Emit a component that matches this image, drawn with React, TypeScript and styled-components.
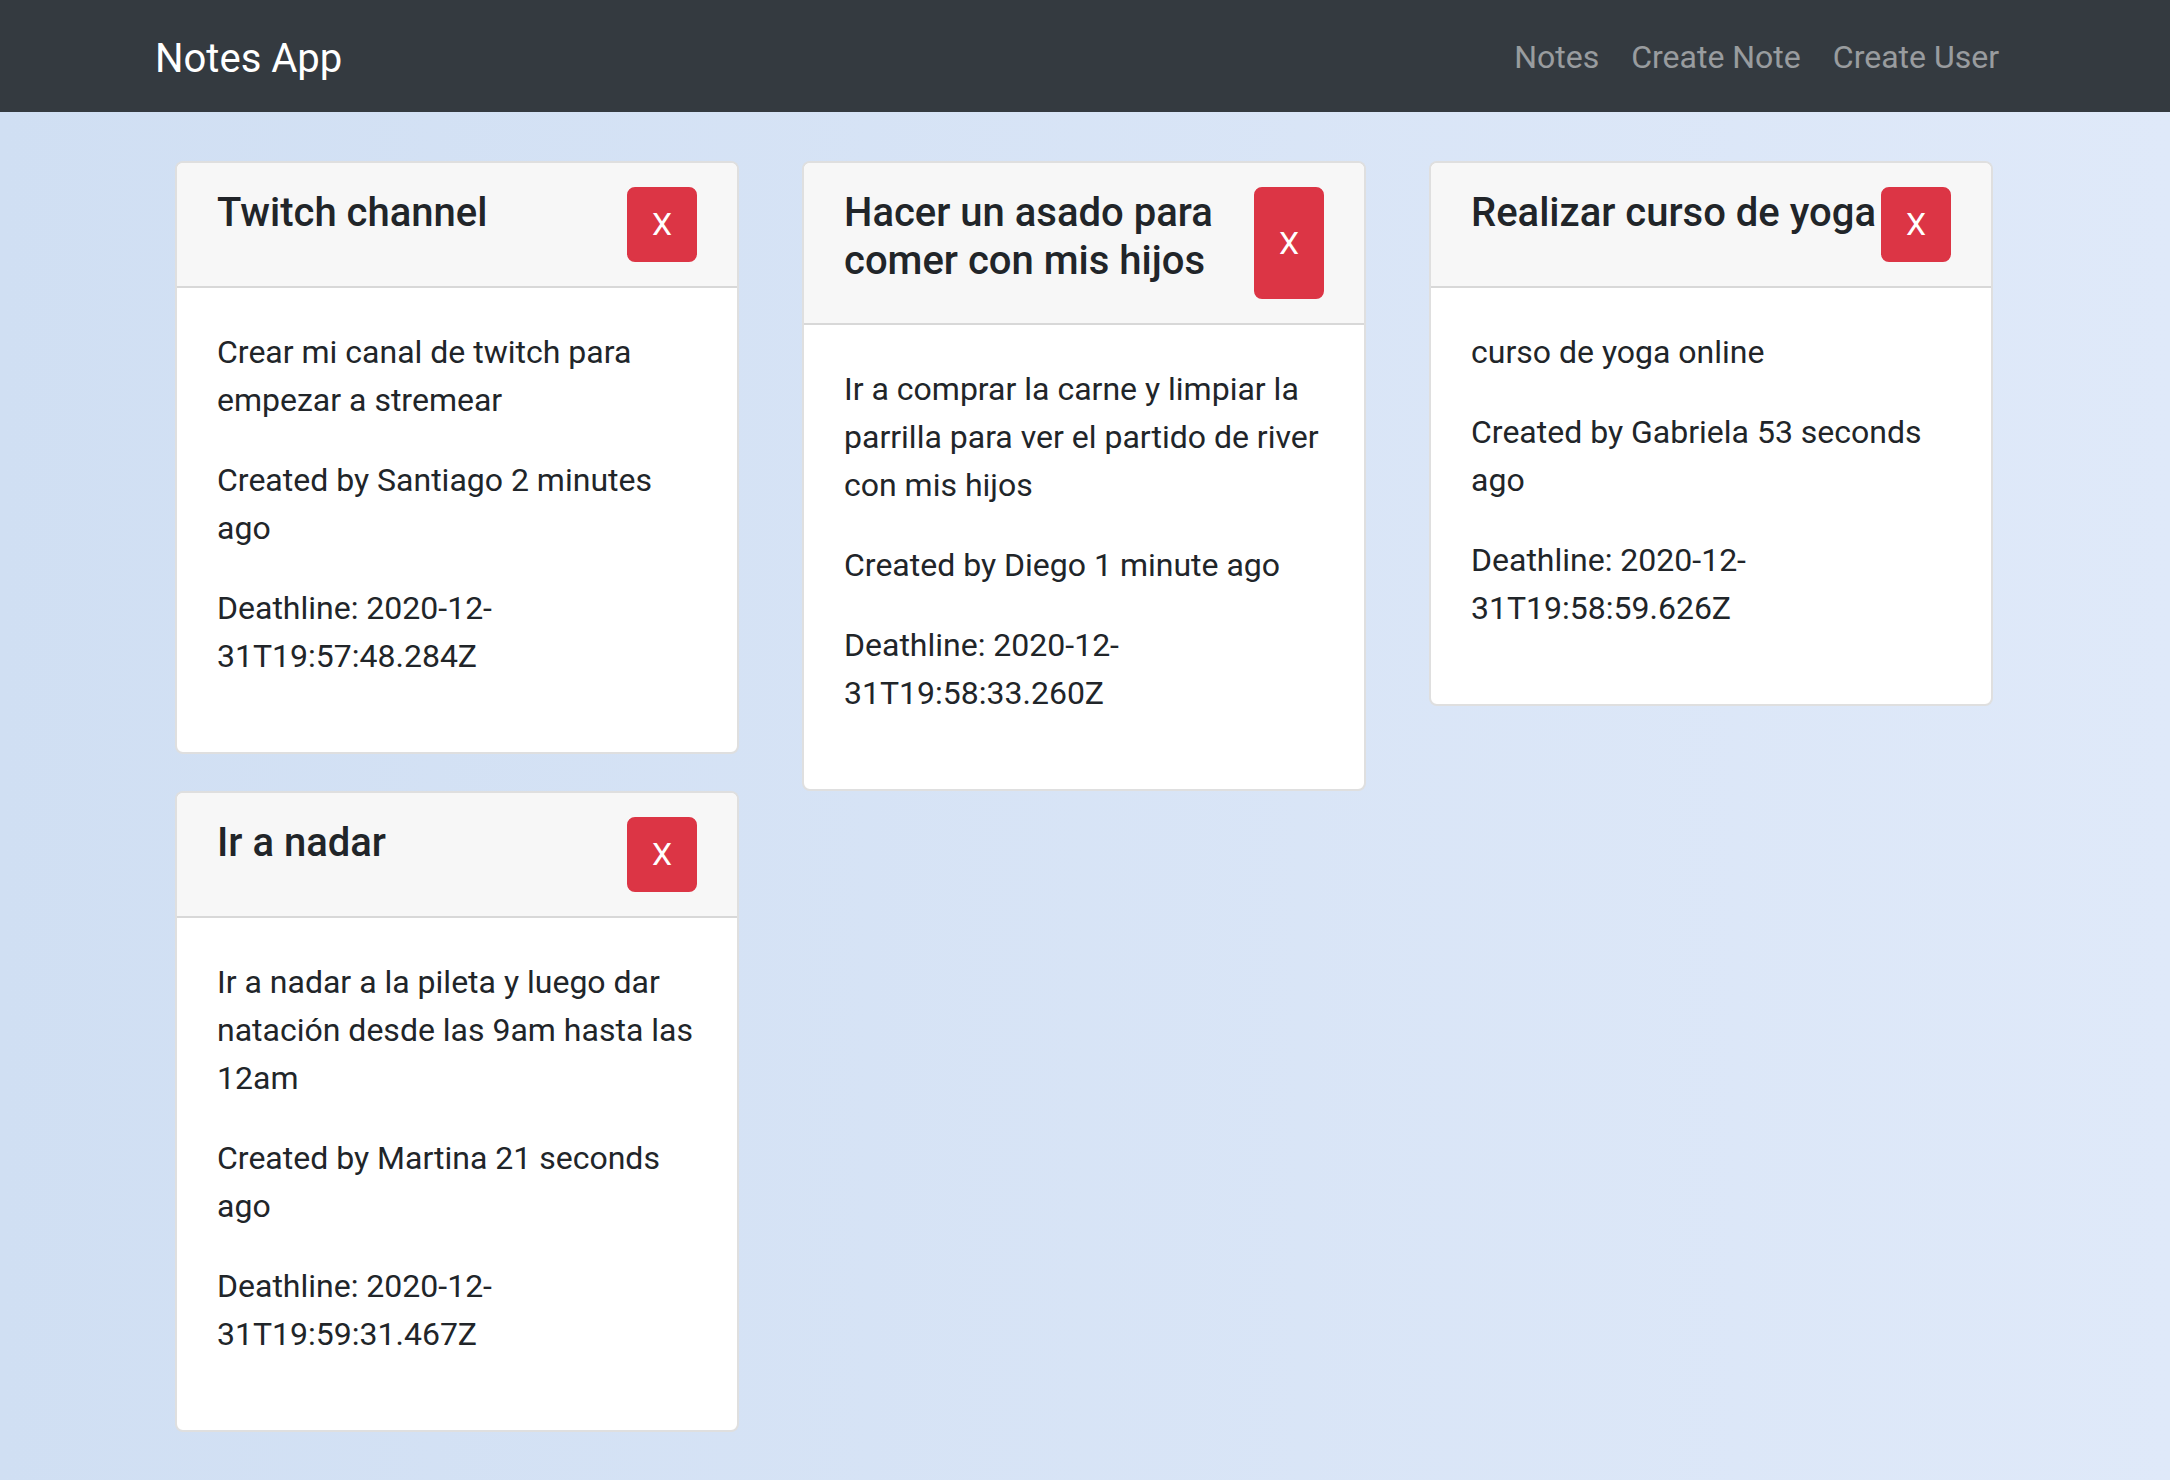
import React from "react";
import styled, { createGlobalStyle } from "styled-components";

const GlobalStyle = createGlobalStyle`
  * { box-sizing: border-box; }
  html, body { margin: 0; padding: 0; }
  body {
    font-family: Roboto, "Noto Sans", "Liberation Sans", sans-serif;
    color: #212529;
    background: linear-gradient(90deg, #d0dff3 0%, #dfe9f9 100%);
    min-height: 100vh;
  }
`;

const Page = styled.div`
  min-height: 100vh;
`;

const Navbar = styled.nav`
  height: 112px;
  background: #343a40;
`;

const NavContainer = styled.div`
  width: 1920px;
  height: 100%;
  margin: 0 auto;
  padding: 0 30px;
  display: flex;
  align-items: center;
  justify-content: space-between;
`;

const Brand = styled.a`
  font-size: 40px;
  line-height: 60px;
  color: #ffffff;
  text-decoration: none;
  margin-top: 5px;
`;

const NavLinks = styled.div`
  display: flex;
  align-items: center;
  margin-top: 1px;
`;

const NavLink = styled.a`
  font-size: 32px;
  line-height: 48px;
  padding: 0 16px;
  color: rgba(255, 255, 255, 0.5);
  text-decoration: none;
`;

const Grid = styled.main`
  width: 1820px;
  margin: 0 auto;
  padding: 49px 2px 0 0;
  display: grid;
  grid-template-columns: repeat(3, 564px);
  column-gap: 63px;
  align-items: start;
`;

const Card = styled.div`
  background: #ffffff;
  border: 2px solid rgba(0, 0, 0, 0.125);
  border-radius: 8px;
  overflow: hidden;
`;

const CardHeader = styled.div`
  display: flex;
  justify-content: space-between;
  padding: 24px 40px;
  background: #f7f7f7;
  border-bottom: 2px solid rgba(0, 0, 0, 0.125);
`;

const Title = styled.h5`
  margin: 0 0 14px;
  padding-top: 2px;
  font-size: 40px;
  font-weight: 500;
  line-height: 48px;
  color: #212529;
`;

const DeleteButton = styled.button`
  flex-shrink: 0;
  font-family: inherit;
  font-size: 32px;
  line-height: 48px;
  padding: 11px 23px 12px;
  color: #ffffff;
  background: #dc3545;
  border: 2px solid #dc3545;
  border-radius: 8px;
  cursor: pointer;
`;

const CardBody = styled.div`
  padding: 40px;
`;

const Text = styled.p`
  margin: 0 0 32px;
  font-size: 32px;
  line-height: 48px;
`;

type Note = {
  title: string;
  content: string;
  author: string;
  ago: string;
  date: string;
};

const notes: Note[] = [
  {
    title: "Twitch channel",
    content: "Crear mi canal de twitch para empezar a stremear",
    author: "Santiago",
    ago: "2 minutes ago",
    date: "2020-12-31T19:57:48.284Z",
  },
  {
    title: "Hacer un asado para comer con mis hijos",
    content: "Ir a comprar la carne y limpiar la parrilla para ver el partido de river con mis hijos",
    author: "Diego",
    ago: "1 minute ago",
    date: "2020-12-31T19:58:33.260Z",
  },
  {
    title: "Realizar curso de yoga",
    content: "curso de yoga online",
    author: "Gabriela",
    ago: "53 seconds ago",
    date: "2020-12-31T19:58:59.626Z",
  },
  {
    title: "Ir a nadar",
    content: "Ir a nadar a la pileta y luego dar natación desde las 9am hasta las 12am",
    author: "Martina",
    ago: "21 seconds ago",
    date: "2020-12-31T19:59:31.467Z",
  },
];

export default function App() {
  return (
    <Page>
      <GlobalStyle />
      <Navbar>
        <NavContainer>
          <Brand href="#">Notes App</Brand>
          <NavLinks>
            <NavLink href="#">Notes</NavLink>
            <NavLink href="#">Create Note</NavLink>
            <NavLink href="#">Create User</NavLink>
          </NavLinks>
        </NavContainer>
      </Navbar>
      <Grid>
        {notes.map((n) => (
          <Card key={n.title}>
            <CardHeader>
              <Title>{n.title}</Title>
              <DeleteButton>X</DeleteButton>
            </CardHeader>
            <CardBody>
              <Text>{n.content}</Text>
              <Text>
                Created by {n.author} {n.ago}
              </Text>
              <Text>Deathline: {n.date}</Text>
            </CardBody>
          </Card>
        ))}
      </Grid>
    </Page>
  );
}
